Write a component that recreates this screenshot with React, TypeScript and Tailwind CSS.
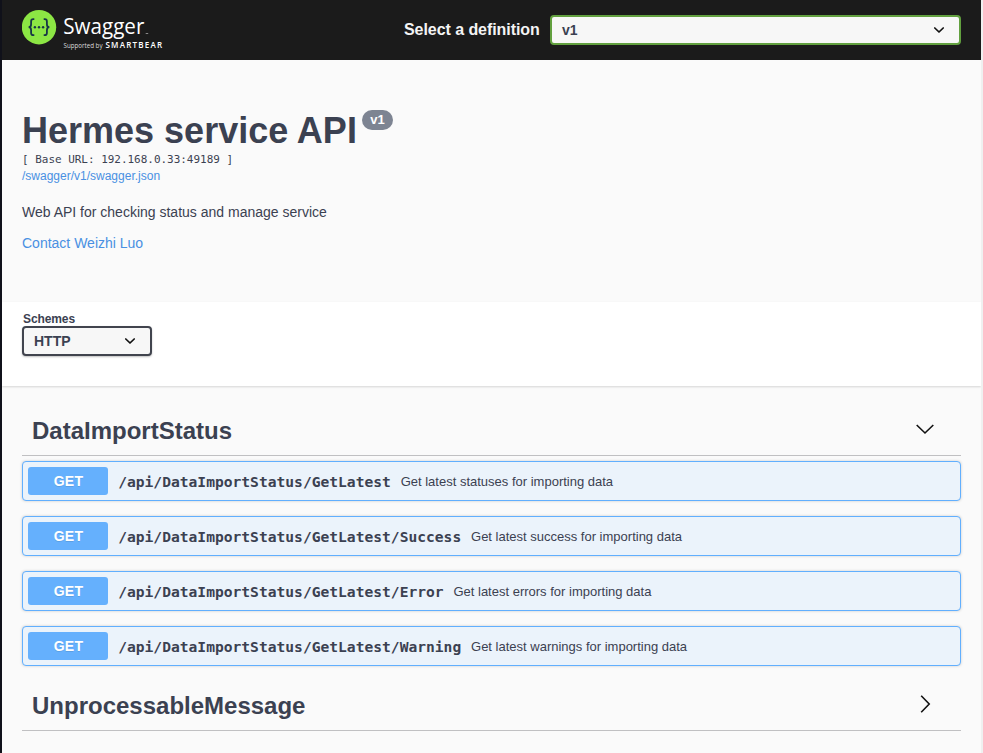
import React from "react";

const operations = [
  { path: "/api/DataImportStatus/GetLatest", summary: "Get latest statuses for importing data" },
  { path: "/api/DataImportStatus/GetLatest/Success", summary: "Get latest success for importing data" },
  { path: "/api/DataImportStatus/GetLatest/Error", summary: "Get latest errors for importing data" },
  { path: "/api/DataImportStatus/GetLatest/Warning", summary: "Get latest warnings for importing data" },
];

function Logo() {
  return (
    <svg width="150" height="50" viewBox="0 0 150 50" className="block">
      <circle cx="17" cy="22.2" r="17.2" fill="#8ce644" />
      <g fill="none" stroke="#173647" strokeWidth="1.8">
        <path d="M12.3 14.2h-1c-1.5 0-2.2.8-2.2 2.2v2.8c0 1.9-.8 3-2.5 3 1.7 0 2.5 1.1 2.5 3v2.8c0 1.4.7 2.2 2.2 2.2h1" />
        <path d="M21.7 14.2h1c1.5 0 2.2.8 2.2 2.2v2.8c0 1.9.8 3 2.5 3-1.7 0-2.5 1.1-2.5 3v2.8c0 1.4-.7 2.2-2.2 2.2h-1" />
      </g>
      <g fill="#173647">
        <circle cx="12.9" cy="22.2" r="1.2" />
        <circle cx="17" cy="22.2" r="1.2" />
        <circle cx="21.1" cy="22.2" r="1.2" />
      </g>
      <text x="41.3" y="29.3" fill="#fff" fontSize="22" textLength="81" lengthAdjust="spacingAndGlyphs" fontFamily="'Open Sans', sans-serif">Swagger</text>
      <path d="M123.7 28.5h2.5" stroke="#888" strokeWidth="1" />
      <text x="41.5" y="43" fill="#ddd" fontSize="6.4" textLength="39" lengthAdjust="spacingAndGlyphs" fontFamily="'Open Sans', sans-serif">Supported by</text>
      <text x="83.5" y="43" fill="#fff" fontSize="8" fontWeight="600" textLength="56.5" fontFamily="'Open Sans', sans-serif">SMARTBEAR</text>
    </svg>
  );
}

function SelectArrow() {
  return (
    <svg width="12" height="8" viewBox="0 0 12 8" className="block">
      <path d="M1.8 2l4.2 4 4.2-4" fill="none" stroke="#111" strokeWidth="1.7" strokeLinecap="round" strokeLinejoin="round" />
    </svg>
  );
}

function TagHeader({ name, open }: { name: string; open: boolean }) {
  return (
    <div className="flex h-[51px] items-center justify-between border-b border-[#c0c0c2] pl-[10px] pr-[26px]">
      <h2 className="pt-px text-[24px] font-bold leading-[30px]">{name}</h2>
      <svg width="20" height="20" viewBox="0 0 20 20" className="mb-[2px] block">
        <path d={open ? "M1.7 6l8.3 8 8.3-8" : "M6.2 1.7l8 8.3-8 8.3"} fill="none" stroke="#111" strokeWidth="1.6" />
      </svg>
    </div>
  );
}

export default function App() {
  return (
    <div className="h-[753px] w-[983px] overflow-hidden border-l-2 border-r-2 border-l-[#10111a] border-r-[#f0f0f0] bg-[#fafafa] font-['Liberation_Sans',Arial,sans-serif] text-[#3b4151]">
      <header className="flex h-[60px] items-center bg-[#1b1b1b] pl-5 pr-5">
        <div className="h-[50px] w-[382px]">
          <Logo />
        </div>
        <span className="w-[146px] whitespace-nowrap text-[16px] font-bold leading-5 tracking-[-0.06px] text-[#f4f4f4]">Select a definition</span>
        <div className="flex h-[30px] flex-1 items-center justify-between rounded-[4px] border-2 border-[#62a03f] bg-[#f7f7f7] pl-[10px] pr-[14px]">
          <span className="text-[14px] font-bold">v1</span>
          <SelectArrow />
        </div>
      </header>

      <section className="h-[242px] px-5 pt-[50px]">
        <div className="flex h-[42px] items-start">
          <h1 className="whitespace-nowrap text-[36px] font-bold leading-[42px]">Hermes service API</h1>
          <span className="ml-[5px] flex h-5 w-[31px] items-center justify-center rounded-full bg-[#7d8492] text-[13px] font-bold text-white">v1</span>
        </div>
        <pre className="font-['DejaVu_Sans_Mono',monospace] text-[10.96px] leading-[16px]">[ Base URL: 192.168.0.33:49189 ]</pre>
        <a className="block text-[12px] leading-4 text-[#4990e2]">/swagger/v1/swagger.json</a>
        <p className="mt-5 text-[14px] leading-4">Web API for checking status and manage service</p>
        <a className="mt-[15px] block text-[14px] leading-4 text-[#4990e2]">Contact Weizhi Luo</a>
      </section>

      <section className="h-[84px] bg-white px-5 pt-[10px] shadow-[0_1px_2px_0_rgba(0,0,0,0.15)]">
        <div className="pl-px text-[12px] font-bold leading-[14px] tracking-[-0.1px]">Schemes</div>
        <div className="flex h-[30px] w-[130px] items-center justify-between rounded-[4px] border-2 border-[#41444e] bg-[#f7f7f7] pl-[10px] pr-[14px] shadow-[0_1px_2px_0_rgba(0,0,0,0.25)]">
          <span className="text-[14px] font-bold">HTTP</span>
          <SelectArrow />
        </div>
      </section>

      <main className="px-5 pt-[19px]">
        <TagHeader name="DataImportStatus" open />
        <div className="flex flex-col gap-[15px] pt-[5px]">
          {operations.map((op) => (
            <div key={op.path} className="flex h-10 items-center rounded-[4px] border border-[#61affe] bg-[#ebf3fb] px-[5px] shadow-[0_0_3px_rgba(0,0,0,0.19)]">
              <span className="flex h-7 w-20 items-center justify-center rounded-[3px] bg-[#65b0fd] pl-px text-[14px] font-bold tracking-[0.3px] text-white [text-shadow:0_1px_0_rgba(0,0,0,0.1)]">GET</span>
              <span className="whitespace-nowrap pl-[10.2px] pt-[2px] font-['DejaVu_Sans_Mono',monospace] text-[14.61px] font-bold leading-5">{op.path}</span>
              <span className="whitespace-nowrap pl-[9.8px] pt-[2px] text-[13px] leading-4">{op.summary}</span>
            </div>
          ))}
        </div>
        <div className="pt-[14px]">
          <TagHeader name="UnprocessableMessage" open={false} />
        </div>
      </main>
    </div>
  );
}
